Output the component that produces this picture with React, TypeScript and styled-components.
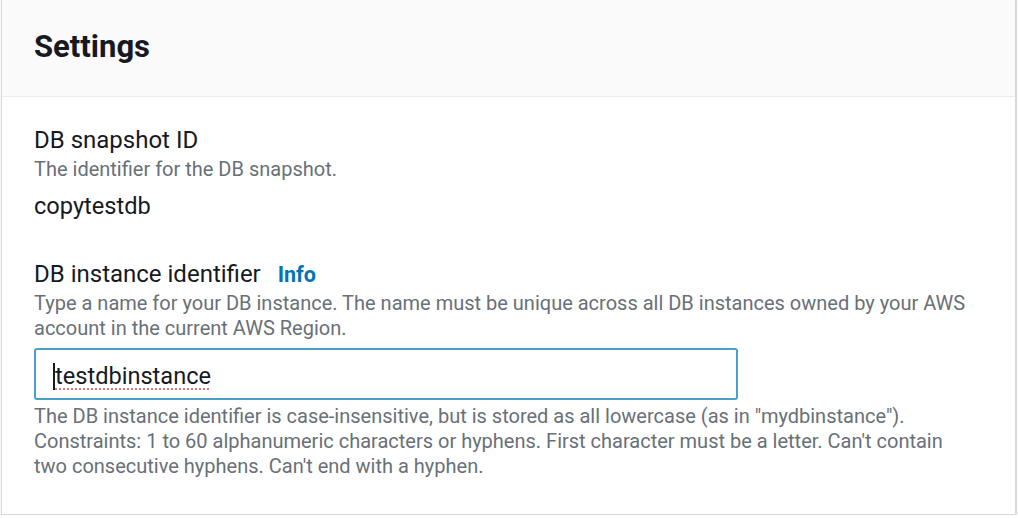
import { FC } from 'react'
import styled, { createGlobalStyle } from 'styled-components'

const GlobalStyle = createGlobalStyle`
  html, body {
    margin: 0;
    padding: 0;
    background: #ffffff;
  }
  body {
    font-family: Roboto, "Liberation Sans", Arial, sans-serif;
    color: #16191f;
    -webkit-font-smoothing: antialiased;
  }
`

const Panel = {
  Box: styled.section`
    box-sizing: border-box;
    width: 1015px;
    margin-left: 1px;
    background: #ffffff;
    border: 1px solid #d5dbdb;
    border-top: none;
    box-shadow: 0 1px 1px 0 rgba(0, 28, 36, 0.2), 1px 0 1px 0 rgba(0, 28, 36, 0.12);
  `,
  Header: styled.header`
    box-sizing: border-box;
    height: 97px;
    padding: 28px 32px 0;
    background: #fafafa;
    border-bottom: 1px solid #eaeded;
  `,
  Title: styled.h2`
    margin: 0;
    font-size: 31px;
    line-height: 37px;
    font-weight: 700;
    color: #16191f;
  `,
  Body: styled.div`
    display: flex;
    flex-direction: column;
    gap: 38px;
    padding: 28px 32px 35px;
  `,
}

const Field = {
  Wrap: styled.div`
    display: flex;
    flex-direction: column;
  `,
  LabelRow: styled.div`
    display: flex;
    align-items: baseline;
    gap: 17px;
  `,
  Label: styled.label`
    font-size: 24px;
    line-height: 30px;
    color: #16191f;
  `,
  Info: styled.a`
    font-size: 21.5px;
    font-weight: 700;
    color: #0073bb;
    text-decoration: none;
    cursor: pointer;
  `,
  Description: styled.p`
    margin: 0;
    padding-top: 2px;
    font-size: 20px;
    line-height: 25px;
    color: #687078;
  `,
  Value: styled.div`
    margin-top: 9px;
    font-size: 23.6px;
    line-height: 30px;
    color: #16191f;
  `,
  Constraint: styled.p`
    margin: 4px 0 0;
    font-size: 20px;
    line-height: 25px;
    color: #687078;
  `,
}

const TextInput = {
  Box: styled.div`
    box-sizing: border-box;
    width: 704px;
    height: 52px;
    margin-top: 7px;
    padding: 11px 17px 0;
    border: 2px solid #4ba0c9;
    border-radius: 3px;
    background: #ffffff;
    display: flex;
    align-items: flex-start;
  `,
  Caret: styled.span`
    width: 2px;
    height: 27px;
    margin-top: 2px;
    background: #16191f;
  `,
  Text: styled.span`
    font-size: 23.6px;
    line-height: 30px;
    color: #16191f;
    text-decoration: underline dotted #e8706e;
    text-decoration-thickness: 2px;
    text-underline-offset: 4px;
  `,
}

const App: FC = () => {
  return (
    <>
      <GlobalStyle />
      <Panel.Box>
        <Panel.Header>
          <Panel.Title>Settings</Panel.Title>
        </Panel.Header>
        <Panel.Body>
          <Field.Wrap>
            <Field.Label>DB snapshot ID</Field.Label>
            <Field.Description>The identifier for the DB snapshot.</Field.Description>
            <Field.Value>copytestdb</Field.Value>
          </Field.Wrap>
          <Field.Wrap>
            <Field.LabelRow>
              <Field.Label>DB instance identifier</Field.Label>
              <Field.Info>Info</Field.Info>
            </Field.LabelRow>
            <Field.Description>
              Type a name for your DB instance. The name must be unique across all DB instances owned by your AWS
              <br />
              account in the current AWS Region.
            </Field.Description>
            <TextInput.Box role="textbox" aria-label="DB instance identifier">
              <TextInput.Caret />
              <TextInput.Text>testdbinstance</TextInput.Text>
            </TextInput.Box>
            <Field.Constraint>
              The DB instance identifier is case-insensitive, but is stored as all lowercase (as in "mydbinstance").
              <br />
              Constraints: 1 to 60 alphanumeric characters or hyphens. First character must be a letter. Can't contain
              <br />
              two consecutive hyphens. Can't end with a hyphen.
            </Field.Constraint>
          </Field.Wrap>
        </Panel.Body>
      </Panel.Box>
    </>
  )
}

export default App
